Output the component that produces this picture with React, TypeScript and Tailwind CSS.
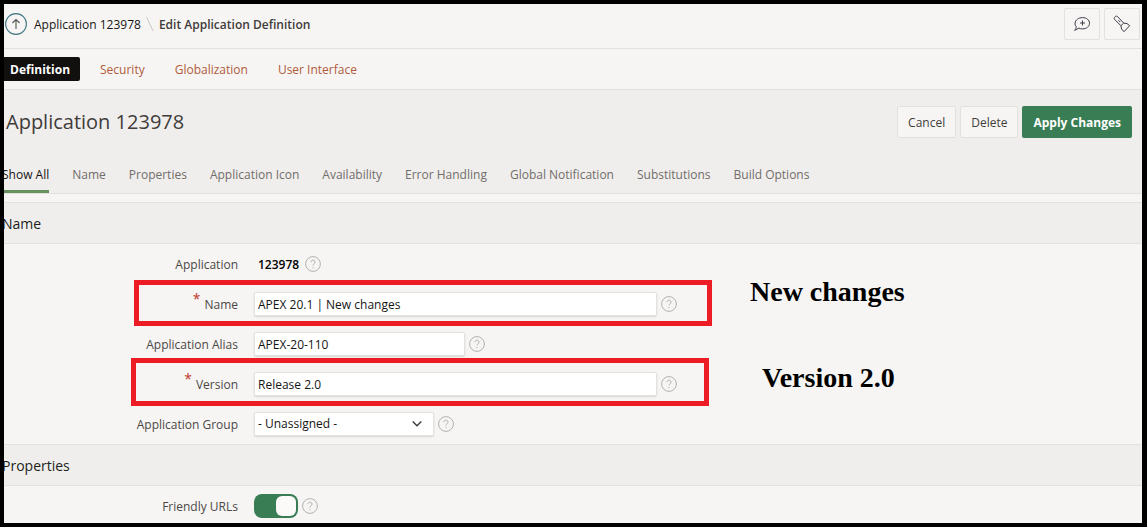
import type { ReactNode } from "react";

const sections = [
  "Name",
  "Properties",
  "Application Icon",
  "Availability",
  "Error Handling",
  "Global Notification",
  "Substitutions",
  "Build Options",
];

function Help({ topic }: { topic: string }) {
  return (
    <button type="button" aria-label={`Help: ${topic}`} className="shrink-0 text-[#b4b2af]">
      <svg width="16" height="16" viewBox="0 0 16 16" fill="none" stroke="currentColor">
        <circle cx="8" cy="8" r="7.4" />
        <path d="M6 6.2a2 2 0 1 1 3.2 1.5C8.4 8.3 8 8.6 8 9.6M8 11v1.1" />
      </svg>
    </button>
  );
}

function Row({
  label,
  id,
  required,
  children,
}: {
  label: string;
  id: string;
  required?: boolean;
  children: ReactNode;
}) {
  return (
    <div className="relative flex h-10 items-center gap-4">
      <label htmlFor={id} className="flex w-[234px] shrink-0 justify-end gap-1 pt-0.5 text-[#4b4846]">
        {required && <span className="-mt-1.5 text-sm leading-5 text-[#c2362b]">*</span>}
        {label}
      </label>
      <div className="flex items-center gap-1">{children}</div>
    </div>
  );
}

function Heading({ children }: { children: ReactNode }) {
  return (
    <h2 className="-ml-0.5 flex h-[42px] items-center border-y border-[#e3e1de] bg-[#f0eeec] pt-0.5 text-sm text-[#201e1c]">
      {children}
    </h2>
  );
}

const field =
  "h-6 rounded-xs border border-[#e3e1de] bg-white px-[3px] text-[#161513] shadow-[0_1px_2px_rgba(0,0,0,0.12)] outline-none";
const plainButton =
  "h-8 rounded-xs border border-[#e3e1de] bg-[#f6f5f3] px-2.5 pt-0.5 text-[#3f3c3a]";
const note =
  "absolute whitespace-nowrap font-['Liberation_Serif',serif] text-[28px] font-bold leading-8 text-black";

export default function App() {
  return (
    <div className="min-h-screen overflow-hidden border-4 border-r-[5px] border-black bg-[#f6f5f3] font-['Open_Sans',sans-serif] text-xs leading-5">
      <div className="overflow-hidden">
        <header className="flex h-[45px] items-center justify-between border-b border-[#e3e1de] pb-1 pr-0.5">
          <nav aria-label="Breadcrumb" className="flex items-center">
            <a href="#up" aria-label="Up" className="ml-px">
              <svg width="22" height="22" viewBox="0 0 22 22" fill="none">
                <circle cx="11" cy="11" r="10.4" stroke="#3f7885" strokeWidth="1.1" />
                <path d="M11 16V6.5M7.5 10 11 6.5l3.500 3.500" stroke="#555" strokeWidth="1.1" />
              </svg>
            </a>
            <a href="#application" className="ml-[7px] pt-0.5 text-[#161513]">
              Application 123978
            </a>
            <svg width="18" height="16" viewBox="0 0 18 16" stroke="#c9c7c4">
              <path d="m5.500 1 6.500 14" />
            </svg>
            <span className="pt-0.5 font-semibold text-[#3f3c3a]">Edit Application Definition</span>
          </nav>
          <div className="flex gap-1">
            <button
              type="button"
              aria-label="Feedback"
              className="flex h-8 w-9 items-center justify-center rounded-xs border border-[#e3e1de]"
            >
              <svg width="16" height="16" viewBox="0 0 16 16" fill="none" stroke="#3f3c4a">
                <path d="M2.200 10.700C1.200 9.500.9 8.400 1.100 7 1.500 4 4.400 1.600 8.500 1.600S15.500 4 15.500 7.200s-2.900 5.700-7 5.700c-1.400 0-2.400-.2-3.500-.8L.6 14.400c1-.9 1.600-2.300 1.600-3.700Z" />
                <path d="M8.500 4.500v5M6 7h5" />
              </svg>
            </button>
            <button
              type="button"
              aria-label="Spotlight search"
              className="flex h-8 w-9 items-center justify-center rounded-xs border border-[#e3e1de]"
            >
              <svg width="18" height="18" viewBox="0 0 18 18" fill="none" stroke="#3f3c4a">
                <path d="M1.500 4.300 7.900 10.700l.7 3.300 2.400 2.700 5.700-6-2.700-2.100-3.300-.5L4.500 1.500C2.900.1.300 2.800 1.500 4.300Z" />
                <path d="m5.500 5.300 1.800 1.800M7.900 10.700l2.800-2.600" />
              </svg>
            </button>
          </div>
        </header>

        <nav aria-label="Application attributes" className="flex h-[41px] items-center border-b border-[#e3e1de] text-[#b05c3c]">
          <a
            href="#definition"
            aria-current="page"
            className="-ml-1.5 flex h-6 items-center rounded-xs bg-[#11100e] pl-3 pr-2.5 pt-0.5 font-bold text-white"
          >
            Definition
          </a>
          <a href="#security" className="ml-5 pt-0.5">Security</a>
          <a href="#globalization" className="ml-[30px] pt-0.5">Globalization</a>
          <a href="#user-interface" className="ml-[30px] pt-0.5">User Interface</a>
        </nav>

        <div className="border-b border-[#e3e1de] bg-[#f0eeec]">
          <div className="flex h-16 items-center justify-between pr-2.5">
            <h1 className="ml-0.5 text-xl text-[#3f3c3a]">Application 123978</h1>
            <div className="flex gap-1">
              <button type="button" className={plainButton}>Cancel</button>
              <button type="button" className={plainButton}>Delete</button>
              <button type="button" className="h-8 rounded-xs bg-[#387d54] px-[11px] pt-0.5 font-bold text-white">
                Apply Changes
              </button>
            </div>
          </div>
          <nav aria-label="Sections" className="-ml-0.5 flex h-[39px] gap-[23px] text-[#706d6a]">
            <a href="#all" aria-current="true" className="border-b-[3px] border-[#67915f] pt-[11px] text-[#161513]">
              Show All
            </a>
            {sections.map((name) => (
              <a key={name} href="#section" className="pt-[11px]">
                {name}
              </a>
            ))}
          </nav>
        </div>

        <form className="mt-2">
          <Heading>Name</Heading>
          <Row label="Application" id="app-id">
            <output id="app-id" className="mr-0.5 pl-1 pt-0.5 font-semibold text-black">123978</output>
            <Help topic="Application" />
          </Row>
          <Row label="Name" id="app-name" required>
            <input id="app-name" defaultValue="APEX 20.1 | New changes" className={`${field} w-[403px]`} />
            <Help topic="Name" />
            <div className="pointer-events-none absolute -top-1 left-[130px] h-[46px] w-[578px] border-5 border-[#ed1c24]" />
            <p className={`${note} -top-2 left-[746px]`}>New changes</p>
          </Row>
          <Row label="Application Alias" id="app-alias">
            <input id="app-alias" defaultValue="APEX-20-110" className={`${field} w-[211px]`} />
            <Help topic="Application Alias" />
          </Row>
          <Row label="Version" id="app-version" required>
            <input id="app-version" defaultValue="Release 2.0" className={`${field} w-[403px]`} />
            <Help topic="Version" />
            <div className="pointer-events-none absolute -top-1.5 left-[127px] h-12 w-[578px] border-5 border-[#ed1c24]" />
            <p className={`${note} -top-0.5 left-[758px]`}>Version 2.0</p>
          </Row>
          <Row label="Application Group" id="app-group">
            <div className="relative">
              <select id="app-group" className={`${field} block w-[180px] appearance-none`}>
                <option>- Unassigned -</option>
              </select>
              <svg
                className="pointer-events-none absolute right-3 top-2"
                width="10"
                height="8"
                viewBox="0 0 10 8"
                fill="none"
                stroke="#3f3c3a"
                strokeWidth="1.400"
              >
                <path d="m.7 1.500 4.300 4.300 4.300-4.300" />
              </svg>
            </div>
            <Help topic="Application Group" />
          </Row>
          <Heading>Properties</Heading>
          <div className="-mb-1">
            <Row label="Friendly URLs" id="friendly-urls">
              <span className="relative flex">
                <input
                  id="friendly-urls"
                  type="checkbox"
                  role="switch"
                  defaultChecked
                  className="peer h-6 w-11 appearance-none rounded-lg bg-[#a3a09c] checked:bg-[#387d54]"
                />
                <span className="pointer-events-none absolute left-0.5 top-0.5 size-5 rounded-md bg-[#fbfaf9] peer-checked:left-[22px]" />
              </span>
              <Help topic="Friendly URLs" />
            </Row>
          </div>
        </form>
      </div>
    </div>
  );
}
